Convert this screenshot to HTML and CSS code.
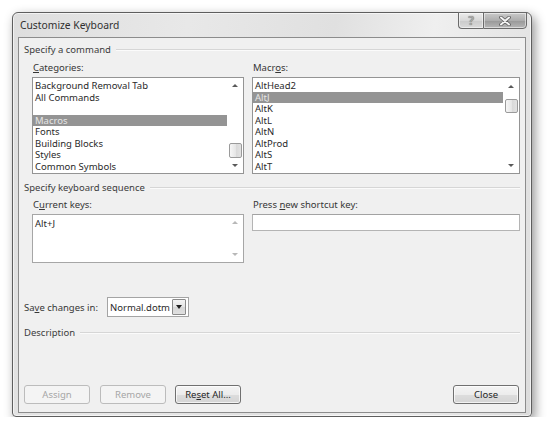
FILE: index.html
```html
<!DOCTYPE html>
<html>
<head>
<meta charset="utf-8">
<title>Customize Keyboard</title>
<link rel="stylesheet" href="styles.css">
</head>
<body>
<div class="window">
  <div class="titlebar">
    <span class="title">Customize Keyboard</span>
    <div class="caption-btns">
      <div class="cbtn help">?</div>
      <div class="cbtn close">
        <svg width="14" height="10" viewBox="0 0 14 10">
          <path d="M3 1.5 L11 8.5 M11 1.5 L3 8.5" stroke="#5c5c5c" stroke-width="3.6" stroke-linecap="round"/>
          <path d="M3 1.5 L11 8.5 M11 1.5 L3 8.5" stroke="#f4f4f4" stroke-width="2" stroke-linecap="round"/>
        </svg>
      </div>
    </div>
  </div>
  <div class="client">
    <div class="group-header"><span>Specify a command</span></div>
    <div class="pair cmd">
      <div class="col">
        <div class="label"><u>C</u>ategories:</div>
        <div class="listbox">
          <ul class="items">
            <li>Background Removal Tab</li>
            <li>All Commands</li>
            <li>&nbsp;</li>
            <li class="sel">Macros</li>
            <li>Fonts</li>
            <li>Building Blocks</li>
            <li>Styles</li>
            <li>Common Symbols</li>
          </ul>
          <div class="sb">
            <div class="sb-btn"><span class="arr up"></span></div>
            <div class="sb-track"><div class="thumb" style="margin-top:49px;height:15px"></div></div>
            <div class="sb-btn"><span class="arr down"></span></div>
          </div>
        </div>
      </div>
      <div class="col">
        <div class="label">Macr<u>o</u>s:</div>
        <div class="listbox">
          <ul class="items">
            <li>AltHead2</li>
            <li class="sel">AltJ</li>
            <li>AltK</li>
            <li>AltL</li>
            <li>AltN</li>
            <li>AltProd</li>
            <li>AltS</li>
            <li>AltT</li>
          </ul>
          <div class="sb">
            <div class="sb-btn"><span class="arr up"></span></div>
            <div class="sb-track"><div class="thumb" style="margin-top:5px;height:14px"></div></div>
            <div class="sb-btn"><span class="arr down"></span></div>
          </div>
        </div>
      </div>
    </div>

    <div class="group-header second"><span>Specify keyboard sequence</span></div>
    <div class="pair keys">
      <div class="col">
        <div class="label">C<u>u</u>rrent keys:</div>
        <div class="keybox">
          <ul class="items pad">
            <li>Alt+J</li>
          </ul>
          <div class="sb disabled">
            <div class="sb-btn"><span class="arr up"></span></div>
            <div class="sb-track"></div>
            <div class="sb-btn"><span class="arr down"></span></div>
          </div>
        </div>
      </div>
      <div class="col">
        <div class="label">Press <u>n</u>ew shortcut key:</div>
        <div class="textbox"></div>
      </div>
    </div>

    <div class="save-row">
      <span class="save-label">Sa<u>v</u>e changes in:</span>
      <div class="combo">
        <span class="combo-text">Normal.dotm</span>
        <div class="combo-btn"><span class="arr down dark"></span></div>
      </div>
    </div>

    <div class="group-header third"><span>Description</span></div>

    <div class="buttons">
      <div class="btn disabled">Assign</div>
      <div class="btn disabled">Remove</div>
      <div class="btn">Re<u>s</u>et All...</div>
      <div class="btn push-right">Close</div>
    </div>
  </div>
</div>
</body>
</html>
```

FILE: styles.css
```css
* { box-sizing: border-box; }

html, body {
  margin: 0;
  padding: 0;
  background: #ffffff;
}

body {
  font-family: "Noto Sans", "Open Sans", "Liberation Sans", sans-serif;
  font-size: 9.5px;
  color: #333333;
}

u { text-decoration: underline; text-underline-offset: 1px; }

.window {
  margin: 12px 0 0 12px;
  width: 520px;
  height: 405px;
  border: 1px solid #5e5e5e;
  border-radius: 6px 6px 4px 4px;
  background: linear-gradient(100deg, #dedede 0%, #e8e8e8 30%, #e0e0e0 55%, #efefef 72%, #dcdcdc 100%);
  box-shadow: inset 0 0 0 1px rgba(255,255,255,0.6), 3px 4px 11px rgba(0,0,0,0.42);
  padding: 0 5px 3px 5px;
  display: flex;
  flex-direction: column;
}

.titlebar {
  height: 24px;
  display: flex;
  align-items: flex-start;
  justify-content: space-between;
  padding-left: 2px;
}

.title {
  font-size: 10.3px;
  line-height: 24px;
  color: #303030;
}

.caption-btns {
  display: flex;
  margin-top: -1px;
  margin-right: -1px;
}

.cbtn {
  height: 17px;
  border: 1px solid #6a6a6a;
  display: flex;
  align-items: center;
  justify-content: center;
  box-shadow: inset 0 0 0 1px rgba(255,255,255,0.5);
}

.cbtn.help {
  width: 25px;
  border-right: none;
  border-radius: 0 0 0 4px;
  background: linear-gradient(#ececec, #d8d8d8 50%, #cacaca 51%, #dadada);
  font-size: 12px;
  font-weight: bold;
  color: #a8a8a8;
  text-shadow: 0 0 1px #555;
  line-height: 15px;
}

.cbtn.close {
  width: 44px;
  border-radius: 0 0 4px 0;
  background: linear-gradient(#cacaca, #adadad 50%, #989898 51%, #b6b6b6);
}

.client {
  height: 376px;
  border: 1px solid #8c8c8c;
  background: #f0f0f0;
  padding: 6px 5px 8px 5px;
  display: flex;
  flex-direction: column;
}

.group-header {
  height: 12px;
  line-height: 12px;
  display: flex;
  align-items: center;
  color: #3c3c3c;
}

.group-header::after {
  content: "";
  flex: 1;
  margin-left: 5px;
  border-top: 1px solid #d6d6d6;
  border-bottom: 1px solid #fbfbfb;
}

.group-header.second { margin-top: 8px; }
.group-header.third { margin-top: 10px; }

.pair {
  margin-left: 8px;
  display: grid;
  grid-template-columns: 212px 268px;
  column-gap: 8px;
}

.pair.cmd { margin-top: 6px; }
.pair.keys { margin-top: 5px; }

.label {
  height: 12px;
  line-height: 12px;
  padding-left: 1px;
  margin-bottom: 3px;
  color: #363636;
}

.listbox {
  height: 97px;
  border: 1px solid #949494;
  background: #ffffff;
  display: flex;
}

.items {
  list-style: none;
  margin: 0;
  padding: 2px 0 0 0;
  flex: 1;
  min-width: 0;
}

.items li {
  height: 11.5px;
  line-height: 11.5px;
  padding-left: 2px;
  white-space: nowrap;
  color: #2a2a2a;
}

.items li.sel {
  background: #949494;
  color: #e6e6e6;
}

.items.pad { padding-top: 3px; }

.sb {
  width: 16px;
  display: flex;
  flex-direction: column;
}

.sb-btn {
  height: 16px;
  display: flex;
  align-items: center;
  justify-content: center;
}

.sb-track { flex: 1; }

.thumb {
  margin-left: 2px;
  margin-right: 1px;
  border: 1px solid #9a9a9a;
  border-radius: 2px;
  background: linear-gradient(90deg, #f6f6f6, #e6e6e6 50%, #d8d8d8 51%, #e2e2e2);
}

.arr {
  width: 0;
  height: 0;
  border-left: 3px solid transparent;
  border-right: 3px solid transparent;
}

.arr.up { border-bottom: 3px solid #5a5a5a; }
.arr.down { border-top: 3px solid #5a5a5a; }
.sb.disabled .arr.up { border-bottom-color: #b8b8b8; }
.sb.disabled .arr.down { border-top-color: #b8b8b8; }
.arr.dark.down { border-top-color: #1e1e1e; border-left-width: 3.5px; border-right-width: 3.5px; border-top-width: 4px; }

.keybox {
  height: 49px;
  border: 1px solid #a6a6a6;
  background: #ffffff;
  display: flex;
}

.keybox .sb-btn { height: 15px; }

.textbox {
  height: 17px;
  border: 1px solid #b4b4b4;
  border-top-color: #a2a2a2;
  background: #ffffff;
}

.save-row {
  margin-top: 34px;
  height: 20px;
  display: flex;
  align-items: center;
}

.save-label {
  width: 83px;
  color: #363636;
}

.combo {
  width: 82px;
  height: 20px;
  border: 1px solid #a4a4a4;
  background: #ffffff;
  display: flex;
  align-items: center;
  padding: 1px 2px 1px 2px;
}

.combo-text {
  flex: 1;
  color: #2a2a2a;
}

.combo-btn {
  width: 14px;
  height: 16px;
  border: 1px solid #8a8a8a;
  border-radius: 1px;
  background: linear-gradient(#f4f4f4, #e4e4e4 50%, #d6d6d6 51%, #e0e0e0);
  display: flex;
  align-items: center;
  justify-content: center;
}

.buttons {
  margin-top: auto;
  display: flex;
  gap: 9px;
  height: 19px;
  padding-right: 1px;
}

.btn {
  width: 66px;
  height: 19px;
  border: 1px solid #707070;
  border-radius: 3px;
  background: linear-gradient(#f4f4f4, #ececec 50%, #dddddd 51%, #d4d4d4);
  box-shadow: inset 0 0 0 1px rgba(255,255,255,0.7);
  display: flex;
  align-items: center;
  justify-content: center;
  color: #262626;
}

.btn.disabled {
  border-color: #bcbcbc;
  background: #f4f4f4;
  color: #a6a6a6;
  box-shadow: none;
}

.btn:first-child { margin-right: 1px; }

.push-right { margin-left: auto; }
```
